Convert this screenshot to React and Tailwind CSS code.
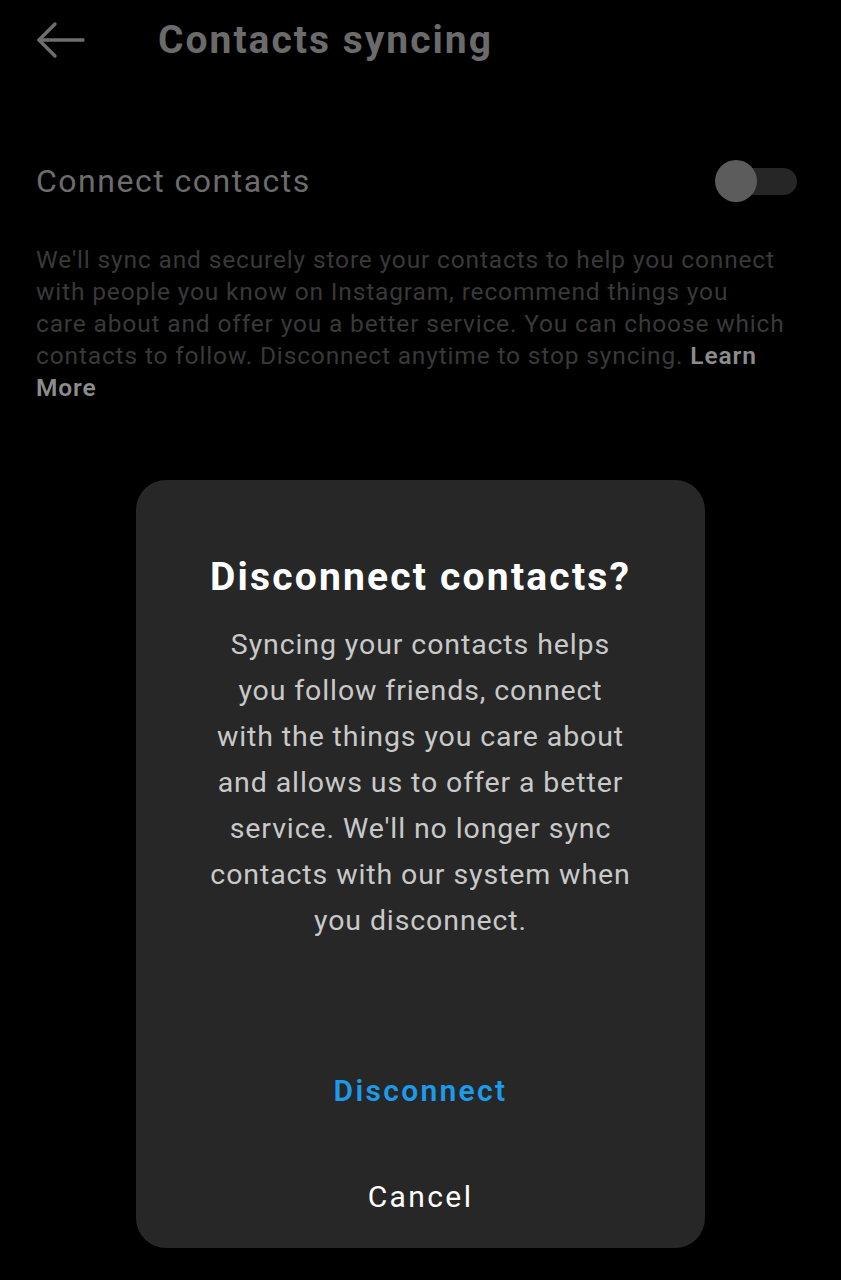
import React from 'react';

function BackArrow() {
  return (
    <svg width="50" height="40" viewBox="0 0 50 40" fill="none" stroke="#6e6e6e" strokeWidth="3.4" strokeLinecap="round" strokeLinejoin="round">
      <path d="M3 20 H47" />
      <path d="M19 4 L3 20 L19 36" />
    </svg>
  );
}

export default function App() {
  return (
    <div className="relative w-[841px] h-[1280px] bg-black overflow-hidden" style={{ fontFamily: 'Roboto, "Noto Sans", sans-serif' }}>
      {/* header */}
      <div className="flex items-center h-[80px] pl-[36px]">
        <BackArrow />
        <h1 className="ml-[72px] text-[39px] font-bold text-[#6b6b6b] tracking-[2px]">Contacts syncing</h1>
      </div>

      {/* connect row */}
      <div className="flex items-center justify-between pl-[36px] pr-[44px] mt-[81px] h-[40px]">
        <span className="text-[32px] text-[#6c6c6c] tracking-[1.5px]">Connect contacts</span>
        <div className="relative w-[82px] h-[42px] flex items-center">
          <div className="absolute right-0 w-[60px] h-[27px] rounded-full bg-[#262626]" />
          <div className="absolute left-0 w-[42px] h-[42px] rounded-full bg-[#5c5c5c]" />
        </div>
      </div>

      <p className="pl-[36px] mt-[43px] text-[24.5px] leading-[32px] text-[#393939] tracking-[0.85px] whitespace-nowrap">
        We'll sync and securely store your contacts to help you connect<br />
        with people you know on Instagram, recommend things you<br />
        care about and offer you a better service. You can choose which<br />
        contacts to follow. Disconnect anytime to stop syncing.{' '}
        <span className="font-semibold text-[#8c8c8c]">Learn</span><br />
        <span className="font-semibold text-[#8c8c8c]">More</span>
      </p>

      {/* dialog */}
      <div className="absolute left-[136px] top-[480px] w-[569px] h-[768px] rounded-[30px] bg-[#272727] flex flex-col items-center">
        <h2 className="mt-[72px] text-[39px] font-bold text-white leading-[50px] tracking-[2.2px]">Disconnect contacts?</h2>
        <p className="mt-[20px] text-center text-[28.5px] leading-[46px] text-[#c9c9c9] tracking-[0.9px] whitespace-nowrap">
          Syncing your contacts helps<br />
          you follow friends, connect<br />
          with the things you care about<br />
          and allows us to offer a better<br />
          service. We'll no longer sync<br />
          contacts with our system when<br />
          you disconnect.
        </p>
        <button className="mt-[127px] text-[30px] font-semibold text-[#1d9bea] leading-[40px] tracking-[2.3px]">Disconnect</button>
        <button className="mt-[66px] text-[30px] text-white leading-[40px] tracking-[2.4px]">Cancel</button>
      </div>
    </div>
  );
}
